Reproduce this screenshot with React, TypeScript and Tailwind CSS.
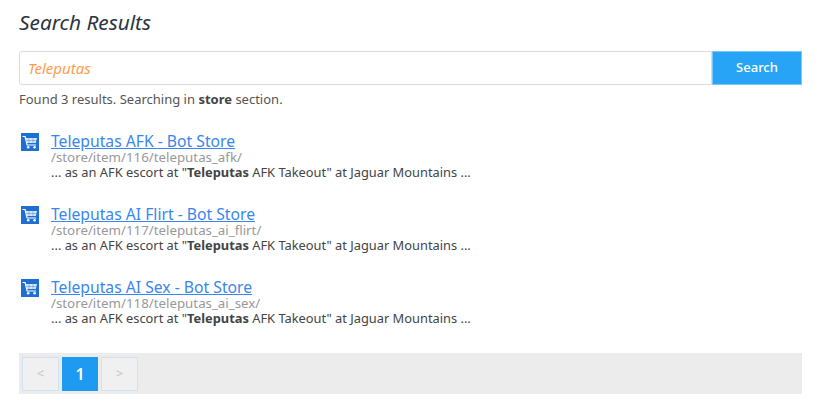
const results = [
  { title: 'Teleputas AFK - Bot Store', path: '/store/item/116/teleputas_afk/' },
  { title: 'Teleputas AI Flirt - Bot Store', path: '/store/item/117/teleputas_ai_flirt/' },
  { title: 'Teleputas AI Sex - Bot Store', path: '/store/item/118/teleputas_ai_sex/' },
];

function CartIcon() {
  return (
    <svg width="18" height="18" viewBox="0 0 18 18" className="shrink-0 mt-[1px]">
      <rect width="18" height="18" fill="#1f6fd0" />
      <path d="M1.5 3.5h2.6l2 8.5h9" fill="none" stroke="#fff" strokeWidth="1.2" />
      <path d="M4.6 5h11.4l-1.2 5H5.8z" fill="#d6e8f9" />
      <path d="M8 5.2v4.6M12 5.2v4.6M5.2 7.5h10.2" stroke="#1f6fd0" strokeWidth="0.4" />
      <circle cx="7.2" cy="14.2" r="1.3" fill="#fff" />
      <circle cx="13.6" cy="14.2" r="1.3" fill="#fff" />
    </svg>
  );
}

export default function App() {
  return (
    <div className="w-[817px] h-[409px] bg-white px-[19px] overflow-hidden font-['Noto_Sans',sans-serif]">
      <h1 className="pt-[9px] h-[51px] text-[20.8px] leading-[26px] italic text-[#2b3440]">Search Results</h1>

      <div className="flex h-[34px] w-[783px]">
        <div className="flex-1 flex items-center px-2 border border-[#dcdcdc] rounded-l-[3px] italic text-[15px] text-[#ff9c4a]">
          Teleputas
        </div>
        <button className="w-[90px] bg-[#27a4f5] border border-[#7cc7f8] text-white text-[13px] font-medium">Search</button>
      </div>

      <p className="mt-[5px] text-[13px] leading-[18px] text-[#555]">
        Found 3 results. Searching in <b className="text-[#444]">store</b> section.
      </p>

      <div className="mt-[24px] flex flex-col gap-[21px]">
        {results.map((r) => (
          <div key={r.path} className="flex gap-[12px] h-[52px] pl-[2px]">
            <CartIcon />
            <div>
              <a href="#" className="block text-[15.7px] leading-[18px] text-[#3a86f0] underline">
                {r.title}
              </a>
              <div className="text-[13.3px] leading-[15px] text-[#999]">{r.path}</div>
              <div className="text-[12.85px] leading-[14px] text-[#444]">
                ... as an AFK escort at "<b>Teleputas</b> AFK Takeout" at Jaguar Mountains ...
              </div>
            </div>
          </div>
        ))}
      </div>

      <div className="mt-[23px] w-[783px] h-[41px] bg-[#ececec] flex items-start gap-[3px] pl-[3px] pt-[4px]">
        <div className="w-[37px] h-[34px] flex items-center justify-center border border-[#cfe2f3] bg-[#f0f0f0] text-[#c4c4c4] text-[13px]">&lt;</div>
        <div className="w-[36px] h-[34px] flex items-center justify-center bg-[#1e9bf0] text-white font-semibold text-[16px]">1</div>
        <div className="w-[37px] h-[34px] flex items-center justify-center border border-[#cfe2f3] bg-[#f0f0f0] text-[#c4c4c4] text-[13px]">&gt;</div>
      </div>
    </div>
  );
}
